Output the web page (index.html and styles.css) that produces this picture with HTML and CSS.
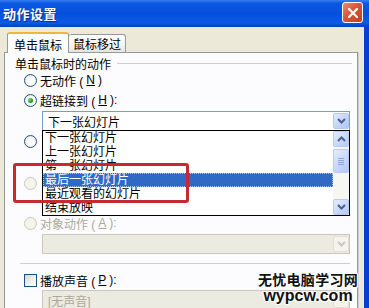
FILE: index.html
```html
<!DOCTYPE html>
<html lang="zh-CN">
<head>
  <meta charset="UTF-8" />
  <title>动作设置</title>
  <link rel="stylesheet" href="styles.css">
</head>
<body>
  <div class="window">
    <div class="titlebar">
      <span class="title">动作设置</span>
      <span class="close-btn">
        <svg width="12" height="12" viewBox="0 0 12 12"><path d="M2 2 L10 10 M10 2 L2 10" stroke="#fff" stroke-width="2.2" stroke-linecap="round"/></svg>
      </span>
    </div>

    <div class="client">
      <div class="tabs">
        <div class="tab active">单击鼠标</div>
        <div class="tab">鼠标移过</div>
      </div>

      <div class="panel">
        <div class="group-title"><span>单击鼠标时的动作</span></div>

        <div class="option first"><span class="radio"></span>无动作 (<u>N</u>)</div>
        <div class="option second"><span class="radio checked"></span>超链接到 (<u>H</u>):</div>
        <div class="combo link-combo">
          <span class="combo-text">下一张幻灯片</span>
          <span class="combo-btn">
            <svg width="9" height="6" viewBox="0 0 9 6"><path d="M1 1 L4.5 4.5 L8 1" fill="none" stroke="#4d6185" stroke-width="2"/></svg>
          </span>
        </div>

        <!-- rows hidden under the open list -->
        <div class="option program"><span class="radio"></span></div>
        <div class="textbox"></div>
        <div class="option macro disabled"><span class="radio"></span></div>
        <div class="combo disabled macro-combo"></div>

        <div class="option object disabled"><span class="radio"></span>对象动作 (<u>A</u>):</div>
        <div class="combo disabled object-combo">
          <span class="combo-btn">
            <svg width="9" height="6" viewBox="0 0 9 6"><path d="M1 1 L4.5 4.5 L8 1" fill="none" stroke="#c9c7ba" stroke-width="2"/></svg>
          </span>
        </div>

        <div class="separator"></div>

        <div class="option sound"><span class="checkbox"></span>播放声音 (<u>P</u>):</div>
        <div class="combo disabled sound-combo">
          <span class="combo-text">[无声音]</span>
          <span class="combo-btn">
            <svg width="9" height="6" viewBox="0 0 9 6"><path d="M1 1 L4.5 4.5 L8 1" fill="none" stroke="#c9c7ba" stroke-width="2"/></svg>
          </span>
        </div>
      </div>
    </div>

    <!-- opened dropdown of the hyperlink combo -->
    <div class="dropdown-list">
      <div class="list-items">
        <div class="list-item">下一张幻灯片</div>
        <div class="list-item">上一张幻灯片</div>
        <div class="list-item">第一张幻灯片</div>
        <div class="list-item selected">最后一张幻灯片</div>
        <div class="list-item">最近观看的幻灯片</div>
        <div class="list-item">结束放映</div>
      </div>
      <div class="scrollbar">
        <div class="scroll-btn">
          <svg width="9" height="6" viewBox="0 0 9 6"><path d="M1 5 L4.5 1.5 L8 5" fill="none" stroke="#4d6185" stroke-width="2"/></svg>
        </div>
        <div class="scroll-thumb">
          <span></span><span></span><span></span><span></span>
        </div>
        <div class="scroll-btn down">
          <svg width="9" height="6" viewBox="0 0 9 6"><path d="M1 1 L4.5 4.5 L8 1" fill="none" stroke="#4d6185" stroke-width="2"/></svg>
        </div>
      </div>
    </div>

    <div class="highlight"></div>

    <div class="watermark">
      <div class="wm-cn">无忧电脑学习网</div>
      <div class="wm-en">wypcw.com</div>
    </div>
  </div>
</body>
</html>
```

FILE: styles.css
```css
* {
  margin: 0;
  padding: 0;
  box-sizing: border-box;
}

body {
  width: 369px;
  height: 308px;
  overflow: hidden;
  font-family: "Liberation Sans", "Noto Sans CJK SC", sans-serif;
  font-size: 12px;
  color: #000;
}

u {
  text-decoration: underline;
}

.window {
  position: relative;
  width: 369px;
  height: 308px;
  display: flex;
  flex-direction: column;
  overflow: hidden;
}

.titlebar {
  height: 27px;
  flex-shrink: 0;
  display: flex;
  align-items: center;
  justify-content: space-between;
  padding: 0 6px 0 3px;
  background: linear-gradient(180deg, #3b7ef0 0%, #0a58e2 12%, #0450dc 50%, #0a5ae6 85%, #0340c2 100%);
}

.title {
  color: #fff;
  font-family: "Noto Sans CJK SC", sans-serif;
  font-weight: 700;
  font-size: 13px;
  letter-spacing: 0.5px;
  text-shadow: 1px 1px 0 #0a2a8c;
}

.close-btn {
  width: 21px;
  height: 21px;
  margin-top: -2px;
  border: 1px solid #fff;
  border-radius: 3px;
  background: linear-gradient(135deg, #ec8a6c 0%, #d9553a 45%, #c0401f 100%);
  display: flex;
  align-items: center;
  justify-content: center;
}

.client {
  flex: 1;
  display: flex;
  flex-direction: column;
  background: #ece9d8;
  border-right: 5px solid #0a3dd0;
  padding-top: 5px;
}

.tabs {
  display: flex;
  align-items: flex-end;
  height: 21px;
  padding-left: 7px;
  margin-bottom: -1px;
  position: relative;
  z-index: 1;
}

.tab {
  display: flex;
  align-items: center;
  justify-content: center;
  border: 1px solid #919b9c;
  border-bottom: none;
  border-radius: 3px 3px 0 0;
}

.tab.active {
  width: 62px;
  height: 21px;
  background: #fcfcfe;
  border-top: 2px solid #f2b440;
  padding-top: 1px;
}

.tab:not(.active) {
  width: 57px;
  height: 18px;
  margin-bottom: 1px;
  background: linear-gradient(180deg, #ffffff 0%, #f4f3ee 60%, #e6e4da 100%);
  border-left: none;
}

.panel {
  flex: 1;
  width: 354px;
  margin-left: 4px;
  border: 1px solid #919b9c;
  border-bottom: none;
  background: #fcfcfe;
  padding-top: 3px;
  box-shadow: 1px 0 0 #d0cfc4;
}

.group-title {
  display: flex;
  align-items: center;
  height: 14px;
  margin: 0 5px 0 10px;
  color: #000;
}

.group-title span {
  padding-right: 6px;
}

.group-title::after {
  content: "";
  flex: 1;
  height: 1px;
  background: #d0d0bf;
}

.option {
  display: flex;
  align-items: center;
  gap: 3px;
  height: 16px;
  padding-left: 19px;
  white-space: nowrap;
}

.option.first { margin-top: 2px; }
.option.second { margin-top: 4px; }
.option.program { margin-top: 2px; }
.option.macro { margin-top: 3px; }
.option.object { margin-top: 1px; }
.option.sound { margin-top: 8px; }

.option.disabled {
  color: #aca899;
}

.radio {
  width: 13px;
  height: 13px;
  border-radius: 50%;
  border: 1px solid #1c5180;
  background: radial-gradient(circle at 60% 60%, #ffffff 30%, #dcdcd6 100%);
  display: flex;
  align-items: center;
  justify-content: center;
  flex-shrink: 0;
}

.radio.checked::after {
  content: "";
  width: 5px;
  height: 5px;
  border-radius: 50%;
  background: radial-gradient(circle at 35% 35%, #6fd36f 0%, #21a121 60%, #1a8a1a 100%);
}

.option.disabled .radio {
  border-color: #cac8bb;
  background: #f5f4ea;
}

.checkbox {
  width: 13px;
  height: 13px;
  border: 1px solid #1c5180;
  background: linear-gradient(135deg, #d6d6d0 0%, #f2f2ee 60%, #ffffff 100%);
  flex-shrink: 0;
}

.combo {
  display: flex;
  align-items: center;
  justify-content: space-between;
  width: 308px;
  height: 20px;
  margin-left: 37px;
  border: 1px solid #7f9db9;
  background: #fff;
  padding: 0 0 0 5px;
}

.combo.disabled {
  border-color: #c9c7ba;
  background: #ecebe1;
  color: #aca899;
}

.link-combo { margin-top: 3px; }
.macro-combo { margin-top: 3px; }
.object-combo { margin-top: 3px; justify-content: flex-end; }
.sound-combo { margin-top: 2px; }

.combo-btn {
  width: 16px;
  height: 16px;
  border: 1px solid #b4c8f6;
  border-radius: 2px;
  background: linear-gradient(135deg, #e2eafe 0%, #c6d6fb 50%, #b0c6f7 100%);
  display: flex;
  align-items: center;
  justify-content: center;
}

.combo.disabled .combo-btn {
  border-color: #e0ded3;
  background: #f4f3ee;
}

.textbox {
  width: 308px;
  height: 20px;
  margin: 3px 0 0 37px;
  border: 1px solid #c9c7ba;
  background: #ecebe1;
}

.separator {
  height: 1px;
  margin: 9px 7px 0 15px;
  background: #d0d0bf;
}

.dropdown-list {
  position: absolute;
  left: 42px;
  top: 130px;
  width: 308px;
  height: 86px;
  border: 1px solid #000;
  background: #fff;
  display: flex;
}

.list-items {
  flex: 1;
}

.list-item {
  height: 14px;
  line-height: 14px;
  padding-left: 2px;
  white-space: nowrap;
}

.list-item.selected {
  background: #316ac5;
  color: #fff;
  outline: 1px dotted #a9c0ea;
  outline-offset: -1px;
}

.scrollbar {
  width: 16px;
  display: flex;
  flex-direction: column;
  background: #f6f6f2;
}

.scroll-btn,
.scroll-thumb {
  border: 1px solid #b6caf6;
  border-radius: 2px;
  background: linear-gradient(135deg, #e4ecfe 0%, #c9d8fb 55%, #b4c9f7 100%);
}

.scroll-btn {
  height: 16px;
  display: flex;
  align-items: center;
  justify-content: center;
}

.scroll-btn.down {
  margin-top: auto;
}

.scroll-thumb {
  height: 24px;
  margin-top: 2px;
  display: flex;
  flex-direction: column;
  align-items: center;
  justify-content: center;
  gap: 1px;
}

.scroll-thumb span {
  width: 6px;
  height: 1px;
  background: #8ca6e0;
}

.highlight {
  position: absolute;
  left: 13px;
  top: 163px;
  width: 176px;
  height: 40px;
  border: 3px solid #c62a2f;
  border-radius: 3px;
}

.watermark {
  position: absolute;
  left: 254px;
  top: 271px;
  width: 108px;
  text-align: center;
  font-weight: 700;
  color: #111;
  text-shadow: 1px 0 0 #fff, -1px 0 0 #fff, 0 1px 0 #fff, 0 -1px 0 #fff, 1px 1px 0 #fff, -1px -1px 0 #fff, 1px -1px 0 #fff, -1px 1px 0 #fff;
}

.wm-cn {
  font-family: "Noto Sans CJK SC", sans-serif;
  font-size: 14px;
  line-height: 16px;
  letter-spacing: 0.3px;
}

.wm-en {
  font-family: "Liberation Sans", Arial, sans-serif;
  font-size: 16px;
  line-height: 17px;
}
```
